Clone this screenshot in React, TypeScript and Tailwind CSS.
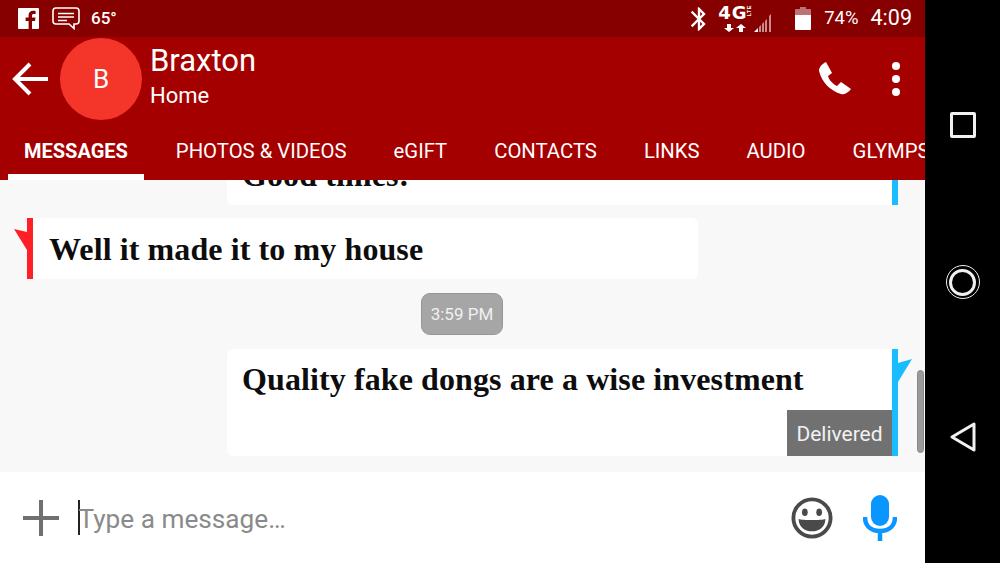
import { MdBluetooth } from "react-icons/md";

const tabs = ["MESSAGES", "PHOTOS & VIDEOS", "eGIFT", "CONTACTS", "LINKS", "AUDIO", "GLYMPSE"];

function FacebookIcon() {
  return (
    <svg width="21" height="21" viewBox="0 0 21 21">
      <path
        fill="#fff"
        d="M0 1a1 1 0 0 1 1-1h19a1 1 0 0 1 1 1v19a1 1 0 0 1-1 1h-6v-8h3l.5-3.400H14V7.600c0-1 .4-1.600 1.700-1.600h1.900V3c-.6-.1-1.500-.2-2.600-.2-2.700 0-4.400 1.600-4.400 4.500v2.300H7.600V13h3v8H1a1 1 0 0 1-1-1z"
      />
    </svg>
  );
}

function CommentIcon() {
  return (
    <svg width="28" height="23" viewBox="0 0 28 23" fill="none" stroke="#fff">
      <path strokeWidth="1.600" d="M4 1h20a3 3 0 0 1 3 3v10a3 3 0 0 1-3 3h-2v4.500L17 17H4a3 3 0 0 1-3-3V4a3 3 0 0 1 3-3z" />
      <path strokeWidth="1.600" d="M6 6.500h16M6 10h16M6 13.500h9" />
    </svg>
  );
}

function NetworkIcon() {
  return (
    <div className="relative w-[55px] h-[28px] ml-[5px]">
      <span className="absolute left-0 top-[-1px] text-white text-[18px] leading-[18px] font-bold font-['DejaVu_Sans'] tracking-[1px]">4G</span>
      <span className="absolute left-[24px] top-[3px] w-[14px] text-center text-white text-[6px] leading-[6px] font-bold font-['Liberation_Sans'] -rotate-90">LTE</span>
      <svg className="absolute left-0 top-0" width="55" height="28" viewBox="0 0 55 28">
        <path fill="#fff" d="M9 19h4v4h3l-5 4-5-4h3zM23 19l5 4h-3v4h-4v-4h-3z" />
        <path fill="#fff" d="M36 27h4v-4l-4 4z" />
        <path fill="#fff" opacity="0.55" d="M41 27h2v-7l-2 2zM44 27h2V17l-2 2zM47 27h2V14l-2 2zM51 27h2V9l-2 2z" />
      </svg>
    </div>
  );
}

function BatteryIcon() {
  return (
    <svg width="16" height="23" viewBox="0 0 16 23">
      <path fill="#fff" opacity="0.45" d="M5 0h6v2h4a1 1 0 0 1 1 1v5H0V3a1 1 0 0 1 1-1h4z" />
      <path fill="#fff" d="M0 8h16v14a1 1 0 0 1-1 1H1a1 1 0 0 1-1-1z" />
    </svg>
  );
}

function BackArrow() {
  return (
    <svg width="36" height="34" viewBox="0 0 36 34" fill="none" stroke="#fff" strokeWidth="4">
      <path d="M36 17H3M18 2 3 17l15 15" />
    </svg>
  );
}

function PhoneIcon() {
  return (
    <svg width="32" height="33" viewBox="0 0 32 33">
      <path fill="#fff" d="M7 0l6 11-4 3c1 4 5 8 9 10l4-4 10 7c-3 4-7 6-10 5C12 29 3 21 0 9c0-4 3-7 7-9z" />
    </svg>
  );
}

function Smiley() {
  return (
    <svg width="42" height="42" viewBox="0 0 44 44">
      <circle cx="22" cy="22" r="19.500" fill="none" stroke="#4a4a4a" strokeWidth="4" />
      <ellipse cx="14.500" cy="16" rx="3" ry="4" fill="#4a4a4a" />
      <ellipse cx="29.500" cy="16" rx="3" ry="4" fill="#4a4a4a" />
      <path fill="#4a4a4a" d="M8 23c4 1.500 24 1.500 28 0 0 8-6 13-14 13S8 31 8 23z" />
    </svg>
  );
}

function Mic() {
  return (
    <svg width="34" height="46" viewBox="0 0 34 46" fill="none">
      <rect x="8" y="0" width="18" height="31" rx="9" fill="#0a96ff" />
      <path stroke="#0a96ff" strokeWidth="4.500" d="M2 22c0 9 6 14 15 14s15-5 15-14M17 36v10" />
    </svg>
  );
}

function Bubble({ side, text, tail, className }: { side: "left" | "right"; text: string; tail?: boolean; className?: string }) {
  const isLeft = side === "left";
  return (
    <div className={`flex shrink-0 ${isLeft ? "ml-[27px] w-[671px]" : "ml-[227px] w-[671px] flex-row-reverse"} ${className ?? ""}`}>
      <div className={`relative w-[6px] shrink-0 ${isLeft ? "bg-[#ff1f26]" : "bg-[#19bdff]"}`}>
        {tail && (
          <svg
            className={`absolute top-[10px] ${isLeft ? "left-[-13px]" : "left-0"}`}
            width="20"
            height="24"
            viewBox="0 0 20 24"
          >
            {isLeft
              ? <path fill="#ff1f26" d="M0 1 13 4v18z" />
              : <path fill="#19bdff" d="M6 4 20 0 6 23z" />}
          </svg>
        )}
      </div>
      <div className={`relative flex-1 bg-white ${isLeft ? "rounded-r-[6px] pl-[16px]" : "rounded-l-[6px] pl-[15px]"} font-['Liberation_Serif'] font-bold text-[#0d0d0d] text-[32px] tracking-[0.1px]`}>
        {text}
      </div>
    </div>
  );
}

export default function App() {
  return (
    <div className="w-[1000px] h-[563px] flex overflow-hidden bg-black font-['Roboto',sans-serif]">
      <div className="w-[925px] h-full flex flex-col">
        <div className="h-[37px] shrink-0 bg-[#860000] flex items-center justify-between pl-[18px] pr-[13px]">
          <div className="flex items-center">
            <FacebookIcon />
            <div className="ml-[13px]"><CommentIcon /></div>
            <span className="ml-[11px] text-white text-[17px] font-medium">65°</span>
          </div>
          <div className="flex items-center">
            <MdBluetooth className="text-white text-[28px]" />
            <NetworkIcon />
            <div className="ml-[22px]"><BatteryIcon /></div>
            <span className="ml-[13px] text-white text-[18.500px]">74%</span>
            <span className="ml-[12px] text-white text-[21.500px]">4:09</span>
          </div>
        </div>

        <div className="h-[143px] shrink-0 bg-[#a50000] flex flex-col">
          <div className="h-[85px] shrink-0 flex items-start pl-[12px] pr-[25px]">
            <div className="mt-[25px]"><BackArrow /></div>
            <div className="ml-[12px] mt-px w-[82px] h-[82px] rounded-full bg-[#f4352a] flex items-center justify-center text-white text-[26px]">B</div>
            <div className="ml-[8px] text-white">
              <div className="text-[31px] leading-[36px] mt-[6px]">Braxton</div>
              <div className="text-[22px] leading-[26px] mt-[4px]">Home</div>
            </div>
            <div className="ml-auto mt-[25px]"><PhoneIcon /></div>
            <div className="ml-[41px] mt-[25px] flex flex-col gap-[5px]">
              <span className="w-[8px] h-[8px] rounded-full bg-white" />
              <span className="w-[8px] h-[8px] rounded-full bg-white" />
              <span className="w-[8px] h-[8px] rounded-full bg-white" />
            </div>
          </div>
          <div className="flex-1 flex pl-[8px] gap-[15px] overflow-hidden">
            {tabs.map((tab, i) => (
              <div
                key={tab}
                className={`shrink-0 px-[16px] pt-[16px] leading-[26px] text-white ${i === 0 ? "text-[20px] font-bold border-b-[6px] border-white mr-px" : "text-[20.300px]"}`}
              >
                {tab}
              </div>
            ))}
          </div>
        </div>

        <div className="relative flex-1 min-h-0 bg-[#f8f8f8] flex flex-col overflow-hidden">
          <Bubble side="right" text="Good times!" className="h-[52px] -mt-[27px] leading-[44px]" />
          <Bubble side="left" text="Well it made it to my house" tail className="h-[61px] mt-[13px] leading-[63px]" />
          <div className="self-center -ml-px pt-[2px] mt-[14px] w-[82px] h-[42px] rounded-[9px] bg-[#a6a6a6] border border-[#979797] flex items-center justify-center text-[#f1f1f1] text-[17px] shrink-0">
            3:59 PM
          </div>
          <div className="relative mt-[14px] shrink-0">
            <Bubble side="right" text="Quality fake dongs are a wise investment" tail className="h-[107px] leading-[60px]" />
            <div className="absolute left-[787px] bottom-0 w-[105px] h-[46px] pt-[3px] bg-[#717171] flex items-center justify-center text-[#f1f1f1] text-[21px]">
              Delivered
            </div>
          </div>
          <div className="absolute left-[917px] top-[190px] w-[7px] h-[83px] rounded-full bg-[#9a9a9a] border border-[#888]" />
        </div>

        <div className="h-[91px] shrink-0 bg-white flex items-center pl-[23px] pr-[28px]">
          <svg width="36" height="36" viewBox="0 0 36 36">
            <path fill="#707070" d="M16 0h4v16h16v4H20v16h-4V20H0v-4h16z" />
          </svg>
          <div className="ml-[19px] w-[1.500px] h-[35px] bg-[#222]" />
          <span className="text-[#8a8a8a] text-[26.200px] -ml-px mt-[4px]">Type a message…</span>
          <div className="ml-auto flex items-center">
            <Smiley />
            <div className="ml-[30px]"><Mic /></div>
          </div>
        </div>
      </div>

      <div className="w-[75px] h-full flex flex-col items-center">
        <div className="mt-[112px] w-[26px] h-[26px] rounded-[2px] border-[3px] border-[#f0f0f0]" />
        <div className="mt-[127px] w-[34px] h-[34px] rounded-full border-[1.500px] border-[#f0f0f0] flex items-center justify-center">
          <span className="w-[27px] h-[27px] rounded-full border-[3.500px] border-[#f0f0f0]" />
        </div>
        <svg className="mt-[123px]" width="26" height="30" viewBox="0 0 26 30" fill="none" stroke="#f0f0f0" strokeWidth="3" strokeLinejoin="round">
          <path d="M24 2v26L2 15z" />
        </svg>
      </div>
    </div>
  );
}
